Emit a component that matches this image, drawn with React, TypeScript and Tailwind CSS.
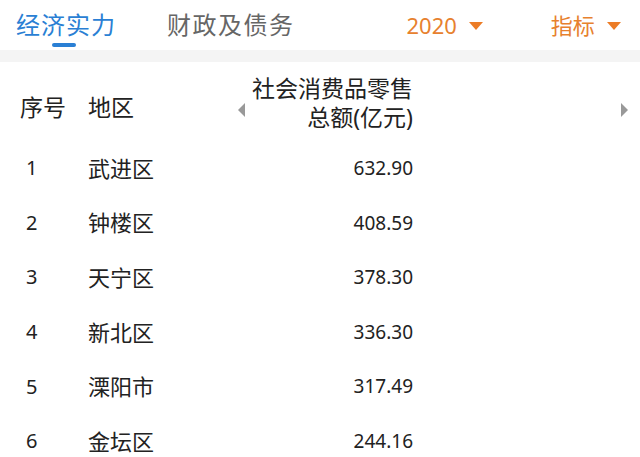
import React from 'react';

const rows = [
  { no: 1, area: '武进区', value: '632.90' },
  { no: 2, area: '钟楼区', value: '408.59' },
  { no: 3, area: '天宁区', value: '378.30' },
  { no: 4, area: '新北区', value: '336.30' },
  { no: 5, area: '溧阳市', value: '317.49' },
  { no: 6, area: '金坛区', value: '244.16' },
];

const font = { fontFamily: '"Noto Sans", "Noto Sans CJK SC", sans-serif' };

const Caret: React.FC = () => (
  <svg width="14" height="9" viewBox="0 0 14 9" className="ml-[12px] mt-[2px]">
    <polygon points="0,0 14,0 7,8" fill="#ec7c26" />
  </svg>
);

const App: React.FC = () => {
  return (
    <div className="w-[640px] h-[457px] overflow-hidden bg-white text-[#222]" style={font}>
      {/* top tabs */}
      <div className="h-[50px] flex items-start">
        <div className="ml-[16px] relative flex flex-col">
          <span className="text-[24px] leading-[50px] text-[#2a7fd4] tracking-[1px]">经济实力</span>
          <span className="absolute left-[36px] top-[43px] w-[24px] h-[4px] rounded-full bg-[#2a7fd4]" />
        </div>
        <span className="ml-[51px] text-[24px] leading-[50px] text-[#666] tracking-[1.5px]">财政及债务</span>
        <div className="ml-[112px] flex items-center h-[50px]">
          <span className="text-[22px] text-[#e7812e]">2020</span>
          <Caret />
        </div>
        <div className="ml-[68px] flex items-center h-[50px]">
          <span className="text-[22px] text-[#e7812e]">指标</span>
          <Caret />
        </div>
      </div>
      <div className="h-[12px] bg-[#f4f4f4]" />

      {/* table header */}
      <div className="h-[79px] flex items-start pl-[20px]">
        <span className="w-[68px] pt-[31px] text-[23px] leading-[28px]">序号</span>
        <span className="w-[150px] pt-[31px] text-[23px] leading-[28px]">地区</span>
        <svg width="8" height="14" viewBox="0 0 8 14" className="mt-[41px]">
          <polygon points="7,0 7,14 0,7" fill="#999" />
        </svg>
        <div className="w-[167px] pt-[12px] text-right text-[23px] leading-[29px]">
          <div>社会消费品零售</div>
          <div>总额(亿元)</div>
        </div>
        <svg width="8" height="14" viewBox="0 0 8 14" className="ml-[208px] mt-[41px]">
          <polygon points="0,0 0,14 7,7" fill="#999" />
        </svg>
      </div>

      {/* rows */}
      {rows.map((r) => (
        <div key={r.no} className="h-[54.6px] flex items-center pl-[26px]">
          <span className="w-[62px] text-[20px]">{r.no}</span>
          <span className="w-[150px] text-[22px]">{r.area}</span>
          <span className="w-[167px] ml-[8px] text-right text-[19px]">{r.value}</span>
        </div>
      ))}
    </div>
  );
};

export default App;
